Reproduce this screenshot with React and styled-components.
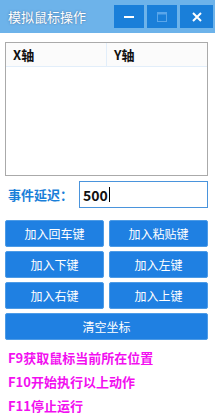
import React from 'react'
import styled, { createGlobalStyle } from 'styled-components'

const GlobalStyle = createGlobalStyle`
  html, body {
    margin: 0;
    padding: 0;
    background: #ffffff;
  }
  body {
    font-family: "Noto Sans CJK SC", "Noto Sans", sans-serif;
  }
`

const Window = styled.div`
  width: 215px;
  height: 417px;
  background: #ffffff;
  overflow: hidden;
`

const TitleBar = styled.div`
  height: 33px;
  background: #6db3ea;
  display: flex;
  align-items: flex-start;
  justify-content: space-between;
  padding-left: 8px;
  box-sizing: border-box;
`

const Title = styled.div`
  color: #ffffff;
  font-size: 13px;
  line-height: 33px;
  text-shadow: 0 0 2px rgba(60, 90, 130, 0.8);
`

const Controls = styled.div`
  display: flex;
  gap: 3px;
  padding-top: 5px;
  padding-right: 2px;
`

const CtrlButton = styled.div`
  width: ${({ $w }) => $w || 30}px;
  height: 23px;
  background: #1a7fd9;
  display: flex;
  align-items: center;
  justify-content: center;
`

const Body = styled.div`
  padding: 9px 7px 0 5px;
`

const ListBox = styled.div`
  height: 134px;
  border: 1px solid #aaaaaa;
  box-sizing: border-box;
  background: #ffffff;
`

const ListHeader = styled.div`
  display: grid;
  grid-template-columns: 101px 1fr;
  height: 23px;
  background: #fbfbfb;
  border-bottom: 1px solid #e2eefa;
`

const HeaderCell = styled.div`
  font-size: 13px;
  font-weight: bold;
  color: #111111;
  line-height: 23px;
  padding-left: 7px;
  border-right: 1px solid ${({ $last }) => ($last ? 'transparent' : '#e2eefa')};
`

const DelayRow = styled.div`
  display: flex;
  align-items: center;
  margin-top: 5px;
`

const DelayLabel = styled.div`
  width: 74px;
  padding-left: 3px;
  box-sizing: border-box;
  font-size: 13px;
  font-weight: bold;
  color: #1a7fd9;
`

const DelayInput = styled.div`
  flex: 1;
  height: 27px;
  border: 1px solid #4a94dc;
  box-sizing: border-box;
  display: flex;
  align-items: center;
  padding-left: 3px;
  font-size: 14px;
  font-weight: bold;
  color: #111111;
`

const Caret = styled.span`
  display: inline-block;
  width: 1px;
  height: 15px;
  background: #000000;
  margin-left: 1px;
`

const ButtonGrid = styled.div`
  display: grid;
  grid-template-columns: 99px 99px;
  column-gap: 5px;
  row-gap: 4px;
  margin-top: 12px;
`

const ActionButton = styled.div`
  grid-column: ${({ $wide }) => ($wide ? '1 / span 2' : 'auto')};
  height: 27px;
  background: #1f80e2;
  border: 1px solid #4d9be6;
  border-radius: 2px;
  box-sizing: border-box;
  color: #ffffff;
  font-size: 12px;
  display: flex;
  align-items: center;
  justify-content: center;
`

const Hints = styled.div`
  margin-top: 6px;
  padding-left: 3px;
  display: flex;
  flex-direction: column;
`

const Hint = styled.div`
  color: #f20ff0;
  font-size: 13px;
  font-weight: bold;
  line-height: 24px;
`

const keys = ['加入回车键', '加入粘贴键', '加入下键', '加入左键', '加入右键', '加入上键']

export default function App() {
  return (
    <Window>
      <GlobalStyle />
      <TitleBar>
        <Title>模拟鼠标操作</Title>
        <Controls>
          <CtrlButton>
            <svg width="10" height="2" viewBox="0 0 10 2">
              <rect width="10" height="2" fill="#ffffff" />
            </svg>
          </CtrlButton>
          <CtrlButton>
            <svg width="10" height="10" viewBox="0 0 10 10">
              <rect x="0.5" y="0.5" width="9" height="9" fill="none" stroke="#5aa6ea" />
              <rect x="0.5" y="0.5" width="9" height="2" fill="#5aa6ea" />
            </svg>
          </CtrlButton>
          <CtrlButton $w={33}>
            <svg width="10" height="10" viewBox="0 0 10 10">
              <path d="M1 1 L9 9 M9 1 L1 9" stroke="#ffffff" strokeWidth="2" />
            </svg>
          </CtrlButton>
        </Controls>
      </TitleBar>
      <Body>
        <ListBox>
          <ListHeader>
            <HeaderCell>X轴</HeaderCell>
            <HeaderCell $last>Y轴</HeaderCell>
          </ListHeader>
        </ListBox>
        <DelayRow>
          <DelayLabel>事件延迟：</DelayLabel>
          <DelayInput>
            500
            <Caret />
          </DelayInput>
        </DelayRow>
        <ButtonGrid>
          {keys.map((k) => (
            <ActionButton key={k}>{k}</ActionButton>
          ))}
          <ActionButton $wide>清空坐标</ActionButton>
        </ButtonGrid>
        <Hints>
          <Hint>F9获取鼠标当前所在位置</Hint>
          <Hint>F10开始执行以上动作</Hint>
          <Hint>F11停止运行</Hint>
        </Hints>
      </Body>
    </Window>
  )
}
